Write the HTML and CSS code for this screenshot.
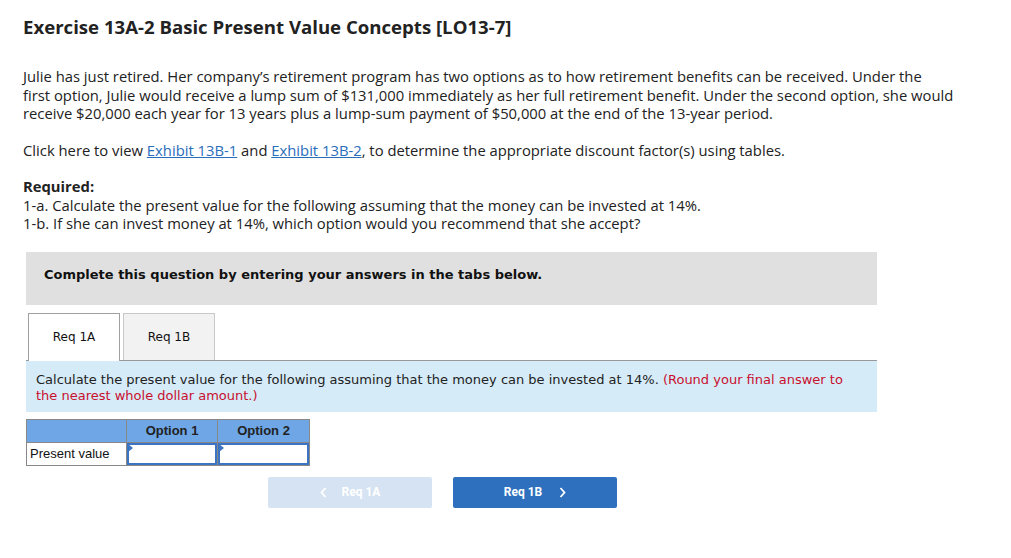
FILE: index.html
```html
<!DOCTYPE html>
<html>
<head>
<meta charset="utf-8">
<link rel="stylesheet" href="styles.css">
</head>
<body>
<div class="page">
  <h1 class="title">Exercise 13A-2 Basic Present Value Concepts [LO13-7]</h1>
  <p class="para intro">Julie has just retired. Her company’s retirement program has two options as to how retirement benefits can be received. Under the<br>first option, Julie would receive a lump sum of $131,000 immediately as her full retirement benefit. Under the second option, she would<br>receive $20,000 each year for 13 years plus a lump-sum payment of $50,000 at the end of the 13-year period.</p>
  <p class="para click">Click here to view <a class="link" href="#">Exhibit 13B-1</a> and <a class="link" href="#">Exhibit 13B-2</a>, to determine the appropriate discount factor(s) using tables.</p>
  <div class="para required">
    <div class="req-head">Required:</div>
    <div>1-a. Calculate the present value for the following assuming that the money can be invested at 14%.</div>
    <div>1-b. If she can invest money at 14%, which option would you recommend that she accept?</div>
  </div>

  <div class="work">
    <div class="banner">Complete this question by entering your answers in the tabs below.</div>
    <div class="tabs">
      <div class="tab active">Req 1A</div>
      <div class="tab">Req 1B</div>
    </div>
    <div class="instr">Calculate the present value for the following assuming that the money can be invested at 14%. <span class="red">(Round your final answer to</span><br><span class="red">the nearest whole dollar amount.)</span></div>

    <table class="grid">
      <tr class="hdr">
        <th class="c0"></th>
        <th class="c1">Option 1</th>
        <th class="c2">Option 2</th>
      </tr>
      <tr>
        <td class="c0 label">Present value</td>
        <td class="c1 inp"><span class="flag"></span></td>
        <td class="c2 inp"><span class="flag"></span></td>
      </tr>
    </table>

    <div class="nav">
      <div class="btn prev">
        <svg class="chev" width="7" height="11" viewBox="0 0 7 11"><polyline points="5.5,1 1.5,5.5 5.5,10" fill="none" stroke="#fff" stroke-width="1.8"/></svg>
        <span>Req 1A</span>
      </div>
      <div class="btn next">
        <span>Req 1B</span>
        <svg class="chev" width="7" height="11" viewBox="0 0 7 11"><polyline points="1.5,1 5.5,5.5 1.5,10" fill="none" stroke="#fff" stroke-width="1.8"/></svg>
      </div>
    </div>
  </div>
</div>
</body>
</html>
```

FILE: styles.css
```css
* { box-sizing: border-box; }
html, body { margin: 0; padding: 0; background: #fff; }
.page {
  padding: 14px 0 0 23px;
  width: 1011px;
  font-family: "Open Sans", "Liberation Sans", sans-serif;
  color: #222;
}
.title {
  margin: 0;
  font-size: 18.6px;
  font-weight: 700;
  line-height: 26px;
  color: #222;
}
.para {
  margin: 0;
  font-size: 14.8px;
  line-height: 18.5px;
}
.intro {
  margin-top: 27px;
  width: 980px;
  white-space: nowrap;
}
.click { margin-top: 18px; }
.link { color: #2a6ebb; text-decoration: underline; }
.required { margin-top: 18px; }
.req-head { font-weight: 700; }

.work {
  margin-top: 19px;
  margin-left: 3px;
  width: 851px;
  font-family: "DejaVu Sans", Verdana, sans-serif;
}
.banner {
  background: #e0e0e0;
  height: 53px;
  padding: 0 18px 7px;
  display: flex;
  align-items: center;
  font-size: 13px;
  font-weight: 700;
  color: #111;
}
.tabs {
  display: flex;
  gap: 3px;
  margin-top: 8px;
  padding-left: 2px;
  border-bottom: 1px solid #999;
}
.tab {
  width: 92px;
  height: 47px;
  display: flex;
  align-items: center;
  justify-content: center;
  font-size: 12px;
  color: #111;
  background: #f2f2f2;
  border: 1px solid #c8c8c8;
  border-bottom: none;
}
.tab.active {
  background: #fff;
  border-color: #a0a0a0;
  margin-bottom: -1px;
  height: 48px;
}
.instr {
  background: #d6ebf8;
  height: 51px;
  padding: 11px 10px 0 10px;
  font-size: 13px;
  line-height: 16px;
  color: #222;
}
.red { color: #c8102e; }

.grid {
  margin-top: 7px;
  border-collapse: collapse;
  font-family: "Liberation Sans", Arial, sans-serif;
}
.grid th, .grid td {
  border: 1px solid #888;
  padding: 0;
  height: 23px;
}
.grid .c0 { width: 100px; }
.grid .c1 { width: 91px; }
.grid .c2 { width: 92px; }
.hdr th {
  background: #6ea6e6;
  font-size: 13px;
  font-weight: 700;
  color: #222;
  text-align: center;
}
.label {
  font-size: 13px;
  color: #111;
  padding-left: 3px !important;
  text-align: left;
}
.inp {
  position: relative;
  background: #fff;
  box-shadow: inset 0 0 0 2px #3b74c2;
}
.flag {
  position: absolute;
  left: 1px;
  top: 1px;
  width: 0;
  height: 0;
  border-top: 4px solid transparent;
  border-bottom: 4px solid transparent;
  border-left: 5px solid #3b74c2;
}

.nav {
  display: flex;
  gap: 21px;
  margin-top: 11px;
  margin-left: 242px;
}
.btn {
  width: 164px;
  height: 31px;
  border-radius: 2px;
  display: flex;
  align-items: center;
  justify-content: center;
  gap: 15px;
  font-family: Roboto, "Liberation Sans", sans-serif;
  font-size: 12px;
  font-weight: 700;
  color: #fff;
}
.prev { background: #d6e3f2; }
.next { background: #2e70bd; gap: 17px; }
```
